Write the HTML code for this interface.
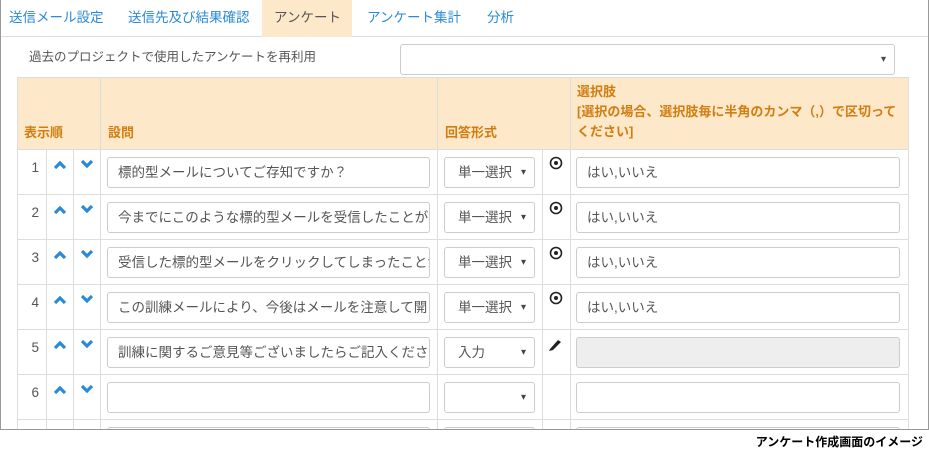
<!DOCTYPE html>
<html><head><meta charset="utf-8"><style>
*{box-sizing:border-box;margin:0;padding:0}
body{width:929px;height:449px;background:#fff;font-family:"Liberation Sans","Noto Sans CJK JP",sans-serif;font-size:13.5px;color:#555;position:relative;overflow:hidden}
.frame{position:absolute;left:0;top:0;width:929px;height:430px;overflow:hidden}
.bd{position:absolute;left:0;top:0;width:929px;height:430px;border:1px solid #999;border-top:none;pointer-events:none}
.a{position:absolute}
.tab{position:absolute;top:0;height:36px;line-height:36px;color:#2a8ad8;font-size:13.5px}
.inp{position:absolute;height:31px;border:1px solid #ccc;border-radius:3px;background:#fff;line-height:29px;padding-left:10px;white-space:nowrap;overflow:hidden;color:#555}
.sel::after{content:"▾";position:absolute;right:8px;top:0;font-size:10px;color:#444}
.hl{position:absolute;height:1px;background:#ddd;left:17px;width:891px}
.vl{position:absolute;width:1px;background:#ddd;top:77px;height:353px}
.num{position:absolute;left:17px;width:29px;text-align:right;padding-right:7px;color:#555}
.hd{position:absolute;color:#d07d12;font-weight:bold;font-size:13px}
</style></head><body>
<div class="frame">
<div class="tab" style="left:9px">送信メール設定</div>
<div class="tab" style="left:128px">送信先及び結果確認</div>
<div class="a" style="left:262px;top:0;width:90px;height:37px;background:#fde9c9"></div>
<div class="tab" style="left:274px;color:#555">アンケート</div>
<div class="tab" style="left:367px">アンケート集計</div>
<div class="tab" style="left:487px">分析</div>
<div class="a" style="left:0;top:36px;width:262px;height:1px;background:#ddd"></div>
<div class="a" style="left:352px;top:36px;width:577px;height:1px;background:#ddd"></div>
<div class="a" style="left:29px;top:46px;font-size:12.5px;color:#555">過去のプロジェクトで使用したアンケートを再利用</div>
<div class="inp sel" style="left:400px;top:44px;width:495px;height:31px"></div>
<div class="a" style="left:17px;top:77px;width:891px;height:72px;background:#fde9c9"></div>
<div class="hd" style="left:24px;top:122px">表示順</div>
<div class="hd" style="left:108px;top:122px">設問</div>
<div class="hd" style="left:445px;top:122px">回答形式</div>
<div class="hd" style="left:577px;top:82px;line-height:20px;width:330px">選択肢<br>[選択の場合、選択肢毎に半角のカンマ（,）で区切って<br>ください]</div>
<div class="hl" style="top:77px"></div>
<div class="hl" style="top:149px"></div>
<div class="hl" style="top:194px"></div>
<div class="hl" style="top:239px"></div>
<div class="hl" style="top:284px"></div>
<div class="hl" style="top:329px"></div>
<div class="hl" style="top:374px"></div>
<div class="hl" style="top:419px"></div>
<div class="vl" style="left:17px"></div>
<div class="vl" style="left:46px;top:149px;height:281px"></div>
<div class="vl" style="left:73px;top:149px;height:281px"></div>
<div class="vl" style="left:100px"></div>
<div class="vl" style="left:437px"></div>
<div class="vl" style="left:542px;top:149px;height:281px"></div>
<div class="vl" style="left:570px"></div>
<div class="vl" style="left:908px"></div>

<svg class="a" style="left:0;top:0" width="929" height="430">
<defs>
<path id="u" d="M1 6 L6 1 L11 6" fill="none" stroke="#2a8ad8" stroke-width="3.2"/>
<path id="d" d="M1 1 L6 6 L11 1" fill="none" stroke="#2a8ad8" stroke-width="3.2"/>
<g id="r"><circle cx="0" cy="0" r="5.5" fill="none" stroke="#222" stroke-width="1.6"/><circle cx="0" cy="0" r="2" fill="#222"/></g>
</defs>
<use href="#u" x="54" y="162"/><use href="#d" x="81" y="160"/>
<use href="#u" x="54" y="207"/><use href="#d" x="81" y="205"/>
<use href="#u" x="54" y="252"/><use href="#d" x="81" y="250"/>
<use href="#u" x="54" y="297"/><use href="#d" x="81" y="295"/>
<use href="#u" x="54" y="342"/><use href="#d" x="81" y="340"/>
<use href="#u" x="54" y="387"/><use href="#d" x="81" y="385"/>
<use href="#r" x="556" y="163"/><use href="#r" x="556" y="208"/><use href="#r" x="556" y="253"/><use href="#r" x="556" y="298"/>
<path d="M550 349 L558 340 L561 342 L553 350 L549 351 Z" fill="#222"/>
</svg>
<div class="num" style="top:160px">1</div>
<div class="num" style="top:205px">2</div>
<div class="num" style="top:250px">3</div>
<div class="num" style="top:295px">4</div>
<div class="num" style="top:340px">5</div>
<div class="num" style="top:385px">6</div>

<div class="inp" style="left:107px;top:157px;width:323px">標的型メールについてご存知ですか？</div>
<div class="inp" style="left:107px;top:202px;width:323px">今までにこのような標的型メールを受信したことがあ</div>
<div class="inp" style="left:107px;top:247px;width:323px">受信した標的型メールをクリックしてしまったことが</div>
<div class="inp" style="left:107px;top:292px;width:323px">この訓練メールにより、今後はメールを注意して開く</div>
<div class="inp" style="left:107px;top:337px;width:323px">訓練に関するご意見等ございましたらご記入ください</div>
<div class="inp" style="left:107px;top:382px;width:323px"></div>
<div class="inp" style="left:107px;top:427px;width:323px"></div>

<div class="inp sel" style="left:444px;top:157px;width:91px;padding-left:13px">単一選択</div>
<div class="inp sel" style="left:444px;top:202px;width:91px;padding-left:13px">単一選択</div>
<div class="inp sel" style="left:444px;top:247px;width:91px;padding-left:13px">単一選択</div>
<div class="inp sel" style="left:444px;top:292px;width:91px;padding-left:13px">単一選択</div>
<div class="inp sel" style="left:444px;top:337px;width:91px;padding-left:13px">入力</div>
<div class="inp sel" style="left:444px;top:382px;width:91px"></div>
<div class="inp" style="left:444px;top:427px;width:91px"></div>

<div class="inp" style="left:576px;top:157px;width:324px">はい,いいえ</div>
<div class="inp" style="left:576px;top:202px;width:324px">はい,いいえ</div>
<div class="inp" style="left:576px;top:247px;width:324px">はい,いいえ</div>
<div class="inp" style="left:576px;top:292px;width:324px">はい,いいえ</div>
<div class="inp" style="left:576px;top:337px;width:324px;background:#eee"></div>
<div class="inp" style="left:576px;top:382px;width:324px"></div>
<div class="inp" style="left:576px;top:427px;width:324px"></div>
</div>
<div class="bd"></div>
<div class="a" style="right:6px;top:433px;font-size:12px;font-weight:bold;color:#000">アンケート作成画面のイメージ</div>
</body></html>
